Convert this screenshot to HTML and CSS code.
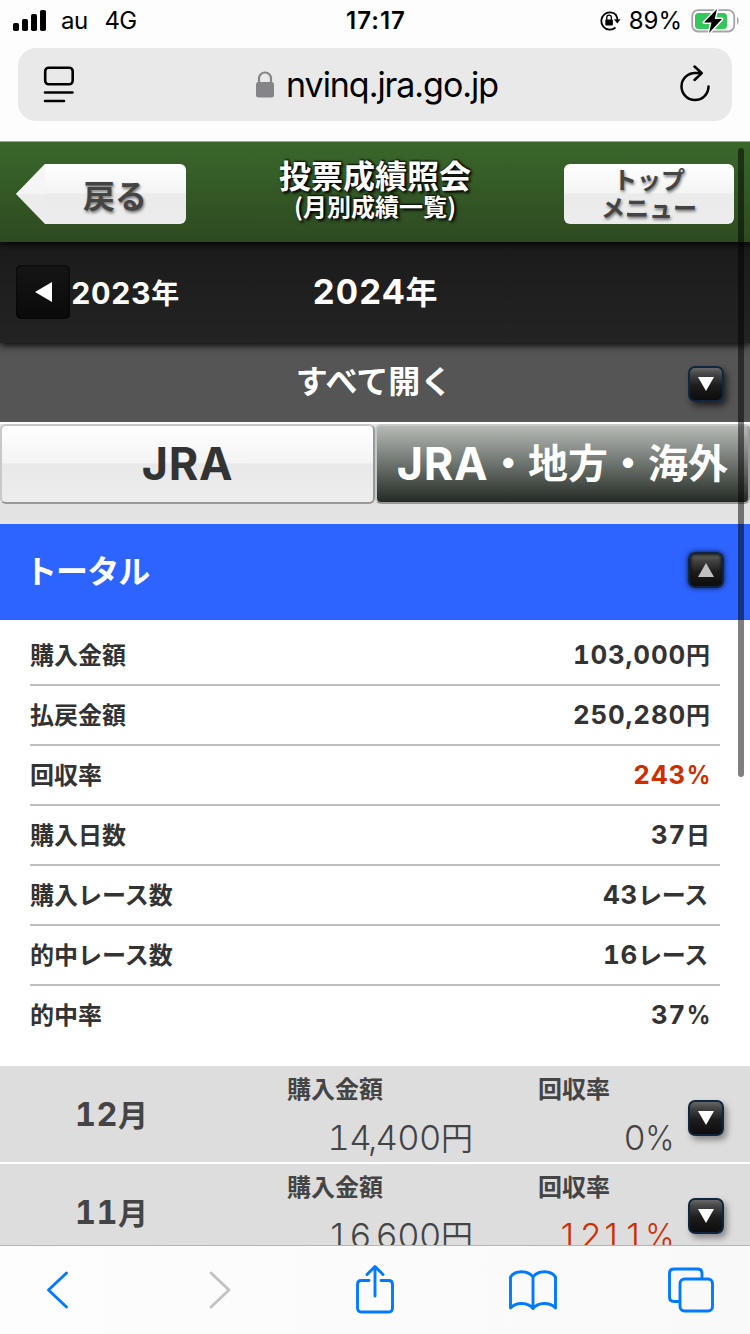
FILE: index.html
```html
<!DOCTYPE html>
<html lang="ja">
<head>
<meta charset="utf-8">
<title>投票成績照会</title>
<link rel="stylesheet" href="styles.css">
</head>
<body>
<div class="phone">
  <div class="status">
    <div class="status-left">
      <svg class="signal" width="34" height="22" viewBox="0 0 34 22"><rect x="0" y="13" width="6" height="8" rx="1.8"/><rect x="9" y="9" width="6" height="12" rx="1.8"/><rect x="18" y="4" width="6" height="17" rx="1.8"/><rect x="27" y="0" width="6" height="21" rx="1.8"/></svg>
      <span class="carrier">au</span><span class="net">4G</span>
    </div>
    <div class="clock">17:17</div>
    <div class="status-right">
      <svg width="22" height="22" viewBox="0 0 22 22"><path d="M17.500 5.500A8.600 8.600 0 1 0 16.500 17.500" fill="none" stroke="#000" stroke-width="1.8"/><path d="M15 9.300H21.500l-3.200 4.300z"/><path d="M18.400 10a9 9 0 0 0-1.500-5" fill="none" stroke="#000" stroke-width="1.8"/><rect x="6.300" y="9.500" width="7.600" height="6" rx="1"/><path d="M7.800 10V7.500a2.300 2.300 0 0 1 4.600 0V10" fill="none" stroke="#000" stroke-width="1.300"/></svg>
      <span class="percent">89%</span>
      <svg width="48" height="24" viewBox="0 0 48 24"><rect x="1.200" y="1.200" width="42" height="21.300" rx="6" fill="none" stroke="#a5a5a7" stroke-width="1.800"/><path d="M46 8c2.200 1 2.200 6.800 0 7.800z" fill="#a5a5a7"/><rect x="4" y="4" width="32" height="16" rx="3.500" fill="#34c759"/><path d="M26 0 13 13.500h7.500L18 24 31 10h-7.300z" fill="#000" stroke="#fff" stroke-width="3" stroke-linejoin="round" paint-order="stroke"/></svg>
    </div>
  </div>
  <div class="address">
    <svg width="32" height="37" viewBox="0 0 32 37" fill="none" stroke="#000" stroke-width="2.600" stroke-linecap="round"><rect x="2.200" y="1.700" width="27.500" height="16.600" rx="3.500"/><path d="M2 26.500h27.500M2 35h19"/></svg>
    <div class="url"><svg width="18" height="27" viewBox="0 0 18 27"><rect y="11" width="18" height="15.500" rx="2.500" fill="#858489"/><path d="M3 12V7.500a6 6 0 0 1 12 0V12" fill="none" stroke="#858489" stroke-width="2.200"/></svg><span>nvinq.jra.go.jp</span></div>
    <svg width="32" height="38" viewBox="0 0 32 38" fill="none" stroke="#000" stroke-width="2.500" stroke-linecap="round" stroke-linejoin="round"><path d="M29.500 20.500A13.500 13.500 0 1 1 16 7h6.500M15.500.500l7.300 6.700-7.300 6.800"/></svg>
  </div>

  <main class="page">
    <header class="header">
      <a class="back"><svg width="31" height="60" viewBox="0 0 31 60"><path d="M1 30 30 0h1v60h-1z" fill="#ececec"/><path d="M1 30 30 0h1v30z" fill="#f5f5f5"/></svg><span>戻る</span></a>
      <h1>投票成績照会<small>(月別成績一覧)</small></h1>
      <a class="menu">トップ<br>メニュー</a>
    </header>
    <nav class="years">
      <div class="prev"><i class="prev-btn"></i><span><b class="n">2023</b>年</span></div>
      <div class="year"><b class="n">2024</b>年</div>
    </nav>
    <div class="open-all"><span>すべて開く</span><i class="toggle"></i></div>
    <div class="tabs">
      <div class="tab"><b class="n">JRA</b></div>
      <div class="tab on"><b class="n">JRA</b><span>・地方・海外</span></div>
    </div>
    <div class="total"><span>トータル</span><i class="toggle up"></i></div>
    <dl class="stats">
      <div><dt>購入金額</dt><dd><b class="n">103,000</b>円</dd></div>
      <div><dt>払戻金額</dt><dd><b class="n">250,280</b>円</dd></div>
      <div><dt>回収率</dt><dd class="red"><b class="n">243<span class="pc">%</span></b></dd></div>
      <div><dt>購入日数</dt><dd><b class="n">37</b>日</dd></div>
      <div><dt>購入レース数</dt><dd class="race"><b class="n">43</b>レース</dd></div>
      <div><dt>的中レース数</dt><dd class="race"><b class="n">16</b>レース</dd></div>
      <div><dt>的中率</dt><dd><b class="n">37<span class="pc">%</span></b></dd></div>
    </dl>
    <section class="month">
      <div class="name"><b class="n">12</b>月</div>
      <div class="amount"><h2>購入金額</h2><p><span class="n">14<span class="comma">,</span>400</span>円</p></div>
      <div class="rate"><h2>回収率</h2><p><span class="n">0<span class="pc">%</span></span></p></div>
      <i class="toggle"></i>
    </section>
    <section class="month">
      <div class="name"><b class="n">11</b>月</div>
      <div class="amount"><h2>購入金額</h2><p><span class="n">16<span class="comma">,</span>600</span>円</p></div>
      <div class="rate"><h2>回収率</h2><p class="red"><span class="n">1211<span class="pc">%</span></span></p></div>
      <i class="toggle"></i>
    </section>
  </main>

  <footer class="toolbar">
    <svg width="24" height="40" viewBox="0 0 24 40" stroke="#007aff"><path d="M20.500 3 2.500 20l18 17"/></svg>
    <svg width="24" height="40" viewBox="0 0 24 40" stroke="#c2c2c4"><path d="m3 3 18 17L3 37"/></svg>
    <svg width="40" height="50" viewBox="0 0 40 50" stroke="#007aff"><path d="M14 15.500H6.500Q2.500 15.500 2.500 19.500V43q0 4 4 4h27q4 0 4-4V19.500q0-4-4-4H26M20 31V2M12 9.500 20 1.500l8 8"/></svg>
    <svg width="50" height="42" viewBox="0 0 50 42" stroke="#007aff"><path d="M25 8C20 1 7 1 2.500 8v31C8 33 20 33 25 39.500 30 33 42 33 47.500 39V8C43 1 30 1 25 8v31"/></svg>
    <svg width="48" height="46" viewBox="0 0 48 46" stroke="#007aff"><rect x="13" y="12" width="32.500" height="32" rx="4.500"/><path d="M12 34.500H7q-4.500 0-4.500-4.500V6.500Q2.500 2 7 2h23.500Q35 2 35 6.500V11"/></svg>
  </footer>
  <div class="scrollbar"></div>
</div>
</body>
</html>
```
FILE: styles.css
```css
* { box-sizing: border-box; }
body, h1, h2, p, dl, dd { margin: 0; }
body { width: 750px; height: 1334px; overflow: hidden; background: #fdfdfd; }
.phone {
  position: relative; width: 750px; height: 1334px; overflow: hidden;
  display: flex; flex-direction: column;
  font-family: "Noto Sans CJK JP", sans-serif; color: #333;
}
svg { display: block; flex: none; overflow: visible; }
i { display: block; flex: none; }
b { font-weight: 700; }
.n { font-family: Inter, sans-serif; font-size: 1.08em; line-height: 1; font-variant-numeric: tabular-nums; }
.pc { display: inline-block; transform: scaleX(.9); transform-origin: right; margin-left: -.09em; }
.comma { margin: 0 -.04em 0 -.09em; }

/* browser chrome */
.status {
  height: 48px; flex: none; padding: 0 11px 6px 13px;
  display: grid; grid-template-columns: 1fr auto 1fr; align-items: center;
  font: 24px/30px Inter, sans-serif; color: #000;
}
.status-left, .status-right { display: flex; align-items: center; }
.status-right { justify-content: flex-end; }
.signal { margin-right: 14px; }
.carrier { margin-right: 17px; letter-spacing: -.6px; }
.net { letter-spacing: -.6px; }
.clock { font-weight: 600; font-size: 24px; letter-spacing: 1px; }
.percent { margin: 0 9px 0 8px; }
.address {
  height: 73px; flex: none; margin: 0 18px 20px; padding: 0 21px 0 25px;
  border-radius: 18px; background: #e9e9ea;
  display: flex; align-items: center; justify-content: space-between;
  font: 34px/40px Inter, sans-serif; color: #000;
}
.url { display: flex; align-items: center; gap: 12px; letter-spacing: -1.05px; }

.page { flex: 1; min-height: 0; overflow: hidden; background: #fff; }
.header {
  position: relative; z-index: 2; height: 101px; padding: 0 16px 0 15px;
  border-top: 1px solid #9aa596;
  background: linear-gradient(#3a672a, #2d4a21);
  box-shadow: 0 2px 8px #000;
  display: grid; grid-template-columns: 171px 1fr 170px;
}
.back, .menu {
  height: 60px; margin-top: 22px;
  color: #444; font-weight: 700; text-shadow: 1px 2px 3px #777;
}
.back { display: flex; }
.back svg { margin-right: -1px; }
.back span {
  flex: 1; padding-left: 38px; font-size: 32px; line-height: 60px;
  border-radius: 0 6px 6px 0;
  background: linear-gradient(#fff, #f4f4f4 48%, #ebebeb 50%, #ececec);
}
.menu {
  font-size: 24px; line-height: 28px; padding-top: 1px; text-align: center;
  border-radius: 6px;
  background: linear-gradient(#fff, #f4f4f4 48%, #ebebeb 50%, #ececec);
}
h1 {
  padding-top: 14px; text-align: center; color: #fff;
  font-size: 32px; line-height: 36px; text-shadow: 1px -1px 2px #000, 2px 2px 3px #000;
}
h1 small { display: block; font-size: 24px; line-height: 27px; }
.years {
  position: relative; z-index: 1; height: 101px; padding: 23px 16px 0;
  background: linear-gradient(#1b1b1b, #232323); box-shadow: 0 2px 8px #000;
  display: grid; grid-template-columns: 1fr auto 1fr;
  color: #fff; font-weight: 700;
}
.prev { display: flex; height: 54px; align-items: center; font-size: 28px; }
.prev span { padding: 0 0 0 1px; line-height: 54px; }
.prev .n { letter-spacing: .5px; }
.year .n { letter-spacing: .9px; }
.prev-btn {
  width: 54px; height: 54px; border-radius: 5px;
  background: linear-gradient(#151515, #0a0a0a); box-shadow: inset 0 0 3px #000;
  display: grid; place-items: center;
}
.prev-btn::before { content: ""; border: 10px solid transparent; border-right: 17px solid #fff; border-left: 0; }
.year { font-size: 32px; line-height: 50px; }
.open-all, .total { display: flex; align-items: center; justify-content: center; color: #fff; font-weight: 700; font-size: 32px; }
.open-all { height: 81px; border-bottom: 2px solid #fff; background: #555; padding: 2px 26px 0 60px; }
.open-all span { flex: 1; text-align: center; margin-top: -10px; }
.toggle {
  width: 36px; height: 36px; border-radius: 7px; border: 2px solid #10253f;
  background: linear-gradient(#666, #444 20%, #1c1c1c 55%, #0d0d0d);
  box-shadow: 3px 4px 6px #222;
  display: grid; place-items: center;
}
.toggle::before { content: ""; border: 8px solid transparent; border-top: 14px solid #fff; border-bottom: 0; }
.toggle.up { box-shadow: 0 0 5px #07142f, inset 0 0 3px 1px #111; }
.toggle.up::before { border: 8px solid transparent; border-bottom: 14px solid #c0c0c0; border-top: 0; }
.tabs { height: 100px; background: #e3e3e3; display: grid; grid-template-columns: 375px 375px; }
.tab {
  height: 80px; border: 2px solid; border-color: #c8c8c8 #999 #999 #c8c8c8; border-radius: 6px;
  background: linear-gradient(#fff, #f4f4f4 48%, #e9e9e9 50%, #ededed);
  display: flex; justify-content: center; align-items: center; padding-bottom: 2px;
  font-size: 40px; line-height: 76px;
}
.tab .n { font-size: 45px; letter-spacing: .6px; }
.tab span { margin-top: -4px; }
.tab.on { background: linear-gradient(#b5bab6, #242b24); color: #fff; font-weight: 700; }
.total { height: 96px; padding: 0 26px 4px 25px; background: #2d63ff; justify-content: space-between; }
.total span { margin-top: -3px; letter-spacing: -.9px; }
.stats { height: 446px; padding: 6px 30px 0; font-size: 24px; font-weight: 700; }
.stats div { height: 60px; padding-right: 10px; border-bottom: 2px solid #c0c0c0; display: flex; justify-content: space-between; line-height: 56px; }
.stats .n { letter-spacing: .8px; font-weight: 750; }
.stats .pc { letter-spacing: 0; }
.stats .race { padding-right: 2px; letter-spacing: -.3px; }
.stats div:last-child { border: 0; }
.red { color: #cc2f00; }
.month {
  height: 96px; margin-bottom: 2px; background: #ddd; color: #444; padding-right: 26px;
  display: grid; grid-template-columns: 223px 250px 201px 1fr;
}
.name { font-size: 30px; font-weight: 700; line-height: 94px; text-align: center; }
.name .n { letter-spacing: .6px; }
.amount, .rate { padding-top: 7px; }
.amount { padding-left: 64px; }
.rate { padding-left: 65px; }
.month h2 { font-size: 24px; line-height: 30px; }
.month p { font-size: 32px; line-height: 66px; text-align: right; font-weight: 350; }
.month p .n { letter-spacing: -.5px; font-weight: 350; }
.month .toggle { margin: 34px 0 0 auto; box-shadow: 3px 4px 6px #888; }
.toolbar {
  height: 89px; flex: none; border-top: 1px solid #b5b5b5;
  background: linear-gradient(90deg, #fdfdfd, #f9f9fa);
  display: grid; grid-template-columns: 162px 147px 153px 159px 1fr; align-items: center; padding-left: 46px;
}
.toolbar svg { fill: none; stroke-width: 2.9; stroke-linecap: round; stroke-linejoin: round; }
.scrollbar { position: absolute; z-index: 5; right: 6px; top: 148px; width: 6px; height: 629px; border-radius: 3px; background: rgba(0, 0, 0, .5); }
```
